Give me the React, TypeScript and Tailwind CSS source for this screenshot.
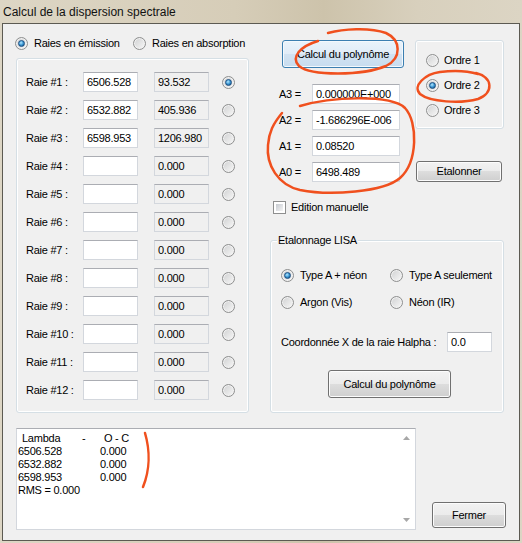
import React from "react";

// Fenêtre WinForms "Calcul de la dispersion spectrale" (thème Windows 7)
const BTN =
  "flex items-center justify-center rounded-[3px] border border-[#707070] bg-[linear-gradient(#f2f2f2_0%,#ebebeb_50%,#dddddd_50%,#cfcfcf_100%)] shadow-[inset_0_0_0_1px_#fcfcfc] text-[11px] text-black whitespace-nowrap";
const BTN_FOCUS =
  "flex items-center justify-center rounded-[3px] border border-[#3c7fb1] bg-[linear-gradient(#eaf3fb_0%,#e0ecf7_50%,#d2e3f2_50%,#c7dcef_100%)] shadow-[inset_0_0_0_1px_#f4f9fd] text-[11px] text-black whitespace-nowrap";
const GROUP = "rounded-[3px] border border-[#d5dfe5] shadow-[inset_0_0_0_1px_#ffffff]";

function Radio({ checked }: { checked?: boolean }) {
  return (
    <span className="flex h-[13px] w-[13px] shrink-0 items-center justify-center rounded-full border border-[#8e8f8f] bg-[linear-gradient(135deg,#cfd0d1,#f8f8f8)] shadow-[inset_0_0_0_1px_#f2f2f2]">
      {checked && (
        <span className="h-[7px] w-[7px] rounded-full border border-[#1b4f82] bg-[radial-gradient(circle_at_40%_35%,#b4e8ff_0%,#3b97d4_50%,#10426f_100%)]" />
      )}
    </span>
  );
}

function Box({ value = "", ro, className }: { value?: string; ro?: boolean; className: string }) {
  return (
    <div
      className={`flex h-[20px] shrink-0 items-center overflow-hidden whitespace-nowrap border border-[#d3d7dd] border-t-[#abadb3] px-[3px] text-[11px] text-black ${
        ro ? "bg-[#f0f0f0]" : "bg-white"
      } ${className}`}
    >
      {value}
    </div>
  );
}

const RAIES: { lambda: string; x: string; on?: boolean }[] = [
  { lambda: "6506.528", x: "93.532", on: true },
  { lambda: "6532.882", x: "405.936" },
  { lambda: "6598.953", x: "1206.980" },
  ...Array.from({ length: 9 }, () => ({ lambda: "", x: "0.000" })),
];

const COEFS = [
  ["A3 =", "0.000000E+000"],
  ["A2 =", "-1.686296E-006"],
  ["A1 =", "0.08520"],
  ["A0 =", "6498.489"],
];

const RESIDUS = ["6506.528", "6532.882", "6598.953"];

export default function App() {
  return (
    <div className="relative h-[543px] w-[522px] overflow-hidden bg-[linear-gradient(90deg,#ddd6c5_0%,#d6cdb8_45%,#cdc3ab_62%,#d8d0bd_80%,#dcd5c4_100%)] font-['Liberation_Sans',Arial,sans-serif] text-black">
      <div className="flex h-[23px] items-center pl-[3px] text-[12px] text-[#111]">Calcul de la dispersion spectrale</div>

      <div className="ml-[2px] flex h-[518px] w-[518px] flex-col whitespace-nowrap border border-[#5c5a52] bg-[#f0f0f0] pl-[12px] pt-[13px] text-[11px] tracking-[-0.25px]">
        <div className="flex">
          {/* colonne des raies */}
          <div className="flex w-[234px] flex-col">
            <div className="flex h-[13px] items-center">
              <div className="flex w-[118px] shrink-0 items-center gap-[6px]">
                <Radio checked />
                <span>Raies en émission</span>
              </div>
              <div className="flex shrink-0 items-center gap-[6px]">
                <Radio />
                <span>Raies en absorption</span>
              </div>
            </div>

            <div className={`${GROUP} ml-[1px] mt-[8px] flex h-[355px] w-[233px] flex-col gap-[8px] pl-[9px] pt-[13px]`}>
              {RAIES.map((r, i) => (
                <div key={i} className="flex h-[20px] items-center">
                  <span className="w-[57px] shrink-0">Raie #{i + 1} :</span>
                  <Box value={r.lambda} className="w-[55px]" />
                  <Box value={r.x} ro className="ml-[16px] w-[55px]" />
                  <span className="ml-[13px]">
                    <Radio checked={r.on} />
                  </span>
                </div>
              ))}
            </div>
          </div>

          {/* partie droite */}
          <div className="ml-[21px] flex w-[234px] flex-col">
            <div className="flex">
              <div className="flex w-[146px] flex-col">
                <button className={`${BTN_FOCUS} ml-[12px] mt-[3px] h-[28px] w-[122px]`}>Calcul du polynôme</button>
                <div className="mt-[16px] flex flex-col gap-[6px]">
                  {COEFS.map(([k, v]) => (
                    <div key={k} className="flex h-[20px] items-center">
                      <span className="w-[42px] shrink-0 pl-[9px]">{k}</span>
                      <Box value={v} className="w-[88px]" />
                    </div>
                  ))}
                </div>
              </div>
              <div className="mt-[3px] flex flex-col justify-between">
                <div className={`${GROUP} flex h-[89px] w-[89px] flex-col gap-[12px] pl-[10px] pt-[13px]`}>
                  {["Ordre 1", "Ordre 2", "Ordre 3"].map((o) => (
                    <div key={o} className="flex h-[13px] items-center gap-[5px]">
                      <Radio checked={o === "Ordre 2"} />
                      <span>{o}</span>
                    </div>
                  ))}
                </div>
                <button className={`${BTN} ml-[1px] h-[21px] w-[86px]`}>Etalonner</button>
              </div>
            </div>

            <div className="mt-[19px] flex h-[13px] items-center gap-[5px] pl-[3px]">
              <span className="h-[13px] w-[13px] border border-[#8e8f8f] bg-white p-[2px]">
                <span className="block h-full w-full bg-[linear-gradient(135deg,#c6cad0,#f4f4f4)]" />
              </span>
              <span>Edition manuelle</span>
            </div>

            <div className={`${GROUP} relative mt-[26px] flex h-[173px] w-[234px] flex-col pl-[10px] pt-[28px]`}>
              <span className="absolute -top-[8px] left-[6px] bg-[#f0f0f0] px-[1px] leading-[14px]">Etalonnage LISA</span>
              <div className="flex flex-col gap-[14px]">
                <div className="flex h-[13px] items-center">
                  <div className="flex w-[109px] shrink-0 items-center gap-[6px]">
                    <Radio checked />
                    <span>Type A + néon</span>
                  </div>
                  <div className="flex items-center gap-[6px]">
                    <Radio />
                    <span>Type A seulement</span>
                  </div>
                </div>
                <div className="flex h-[13px] items-center">
                  <div className="flex w-[109px] shrink-0 items-center gap-[6px]">
                    <Radio />
                    <span>Argon (Vis)</span>
                  </div>
                  <div className="flex items-center gap-[6px]">
                    <Radio />
                    <span>Néon (IR)</span>
                  </div>
                </div>
              </div>
              <div className="mt-[23px] flex h-[20px] items-center">
                <span className="w-[166px] shrink-0">Coordonnée X de la raie Halpha :</span>
                <Box value="0.0" className="w-[45px]" />
              </div>
              <button className={`${BTN} ml-[47px] mt-[18px] h-[28px] w-[123px]`}>Calcul du polynôme</button>
            </div>
          </div>
        </div>

        {/* résultats */}
        <div className="mt-[15px] flex items-end">
          <div className="ml-[1px] flex h-[102px] w-[400px] border border-[#d3d7dd] border-t-[#abadb3] bg-white">
            <div className="flex-1 pl-[1px] pt-[3px] text-[11px] leading-[13px]">
              <div className="flex">
                <span className="w-[64px] pl-[4px]">Lambda</span>
                <span className="w-[22px]">-</span>
                <span>O - C</span>
              </div>
              {RESIDUS.map((l) => (
                <div key={l} className="flex">
                  <span className="w-[82px]">{l}</span>
                  <span>0.000</span>
                </div>
              ))}
              <div>RMS = 0.000</div>
            </div>
            <div className="flex w-[17px] flex-col items-center justify-between bg-white py-[7px]">
              <svg width="7" height="4" viewBox="0 0 7 4">
                <path d="M0 4 L3.5 0 L7 4 Z" fill="#a7a7a7" />
              </svg>
              <svg width="7" height="4" viewBox="0 0 7 4">
                <path d="M0 0 L3.5 4 L7 0 Z" fill="#a7a7a7" />
              </svg>
            </div>
          </div>
          <button className={`${BTN} mb-[2px] ml-[16px] h-[26px] w-[74px]`}>Fermer</button>
        </div>
      </div>

      {/* annotations au feutre rouge */}
      <svg className="pointer-events-none absolute left-0 top-0" width="522" height="543" viewBox="0 0 522 543" fill="none">
        <g stroke="#f0501e" strokeWidth="2.5" strokeLinecap="round" fill="none">
          <path d="M318 41 C301 46 290 57 299 66 C311 76 362 76 386 66 C402 58 401 40 386 33 C369 27 343 29 328 33" />
          <path d="M476 73 C493 77 494 93 478 99 C460 104 430 102 420 94 C412 86 425 74 440 72 C455 70 468 71 478 74" />
          <path d="M300 106 C330 97 390 94 405 108 C418 122 418 162 400 178 C384 192 330 196 300 190 C278 185 266 165 268 145 C269 132 273 124 282 113" />
          <path d="M145 433 C150 450 150 470 143 487" />
        </g>
      </svg>
    </div>
  );
}
